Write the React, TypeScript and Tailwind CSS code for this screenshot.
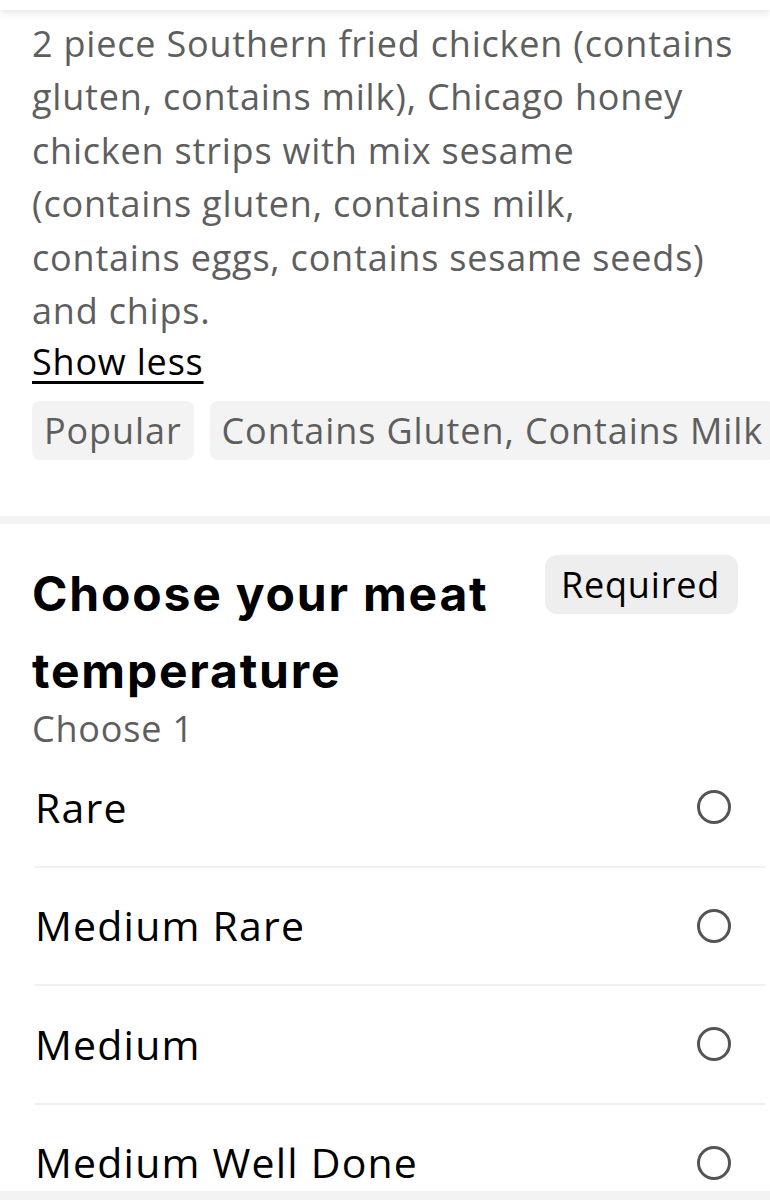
import type { ReactNode } from 'react'

const description = [
  '2 piece Southern fried chicken (contains',
  'gluten, contains milk), Chicago honey',
  'chicken strips with mix sesame',
  '(contains gluten, contains milk,',
  'contains eggs, contains sesame seeds)',
  'and chips.',
]

const options = ['Rare', 'Medium Rare', 'Medium', 'Medium Well Done']

function Chip({ children }: { children: ReactNode }) {
  return (
    <span className="shrink-0 whitespace-nowrap rounded-lg bg-[#f3f3f3] px-[12px] py-[9px] text-[36px] leading-[41px] tracking-[0.9px] text-[#5e5e5e]">
      {children}
    </span>
  )
}

function Radio() {
  return <span className="block h-[34px] w-[34px] rounded-full border-[3px] border-[#545454]" />
}

export default function App() {
  return (
    <div className="h-[1200px] w-[770px] overflow-hidden bg-white font-['Open_Sans',sans-serif]">
      {/* header edge */}
      <div className="h-[10px] bg-white shadow-[0_2px_8px_rgba(0,0,0,0.12)]" />

      {/* item description */}
      <div className="pl-8 pt-[7px]">
        <p className="text-[36px] leading-[53.4px] tracking-[0.8px] text-[#5e5e5e]">
          {description.map((l) => (
            <span key={l} className="block whitespace-nowrap">
              {l}
            </span>
          ))}
        </p>
        <button className="block text-[36px] leading-[50px] tracking-[0.8px] text-black underline underline-offset-[6px]">
          Show less
        </button>
        <div className="mt-[14px] flex gap-4 overflow-hidden">
          <Chip>Popular</Chip>
          <Chip>Contains Gluten, Contains Milk</Chip>
        </div>
      </div>

      <div className="mt-[56px] h-[8px] bg-[#f3f3f3]" />

      {/* option group */}
      <div className="px-8 pt-[31px]">
        <div className="flex items-start justify-between">
          <h2 className="font-['Inter',sans-serif] text-[48px] font-bold leading-[77px] tracking-[1.8px] text-black">
            Choose your meat
            <br />
            temperature
          </h2>
          <span className="rounded-xl bg-[#eeeeee] py-[9px] pl-[16px] pr-[18px] text-[36px] leading-[41px] tracking-[0.8px] text-black">
            Required
          </span>
        </div>
        <div className="text-[36px] leading-[40px] tracking-[0.8px] text-[#5e5e5e]">Choose 1</div>
      </div>

      <div className="pl-[35px] pr-[5px]">
        {options.map((o, i) => (
          <div
            key={o}
            className={
              'pr-[34px] pt-[34px] ' +
              (i < options.length - 1 ? 'h-[118.5px] border-b-2 border-[#f0f0f0]' : 'h-[84px]')
            }
          >
            <div className="flex h-[48px] items-center justify-between">
              <span className="text-[41px] tracking-[1.2px] text-black">{o}</span>
              <Radio />
            </div>
          </div>
        ))}
      </div>
      <div className="mt-[2px] h-[12px] bg-[#f3f3f3]" />
    </div>
  )
}
